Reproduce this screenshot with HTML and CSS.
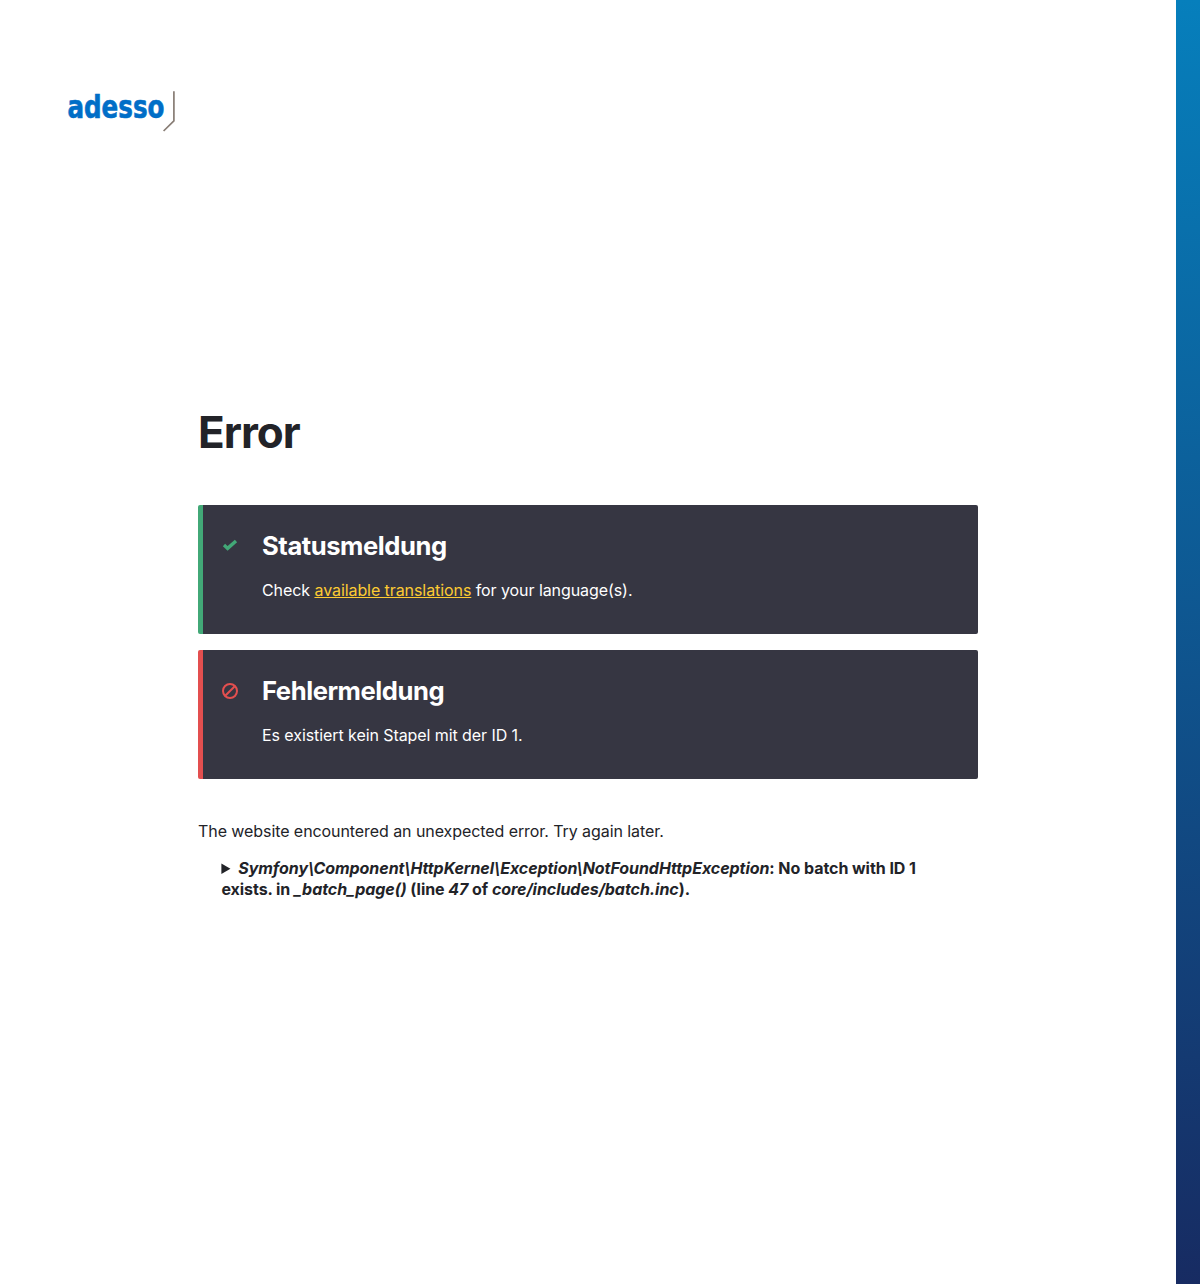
FILE: index.html
```html
<!DOCTYPE html>
<html lang="de">
<head>
<meta charset="utf-8">
<title>Error</title>
<link rel="stylesheet" href="styles.css">
</head>
<body>
<div class="page">
  <header class="site-header">
    <svg class="logo" width="108" height="42" viewBox="0 0 108 42" role="img" aria-label="adesso">
      <text class="logo-text" x="-0.6" y="28" textLength="97" lengthAdjust="spacingAndGlyphs">adesso</text>
      <path class="logo-mark" d="M105.9 1.3V30.8L95.6 41"/>
    </svg>
  </header>
  <main class="content">
    <h1 class="page-title">Error</h1>
    <div class="messages">
      <section class="message message-status">
        <svg class="message-icon" width="16" height="16" viewBox="0 0 16 16"><path d="M2 7.1L5.6 10.4L14 3" fill="none" stroke="currentColor" stroke-width="3.4"/></svg>
        <div class="message-body">
          <h2 class="message-title">Statusmeldung</h2>
          <p class="message-text">Check <a class="message-link" href="#">available translations</a> for your language(s).</p>
        </div>
      </section>
      <section class="message message-error">
        <svg class="message-icon" width="16" height="16" viewBox="0 0 16 16"><g fill="none" stroke="currentColor" stroke-width="2"><circle cx="8" cy="8" r="7"/><path d="M3.2 12.8L12.8 3.2"/></g></svg>
        <div class="message-body">
          <h2 class="message-title">Fehlermeldung</h2>
          <p class="message-text">Es existiert kein Stapel mit der ID 1.</p>
        </div>
      </section>
    </div>
    <p class="intro">The website encountered an unexpected error. Try again later.</p>
    <details class="exception">
      <summary><em>Symfony\Component\HttpKernel\Exception\NotFoundHttpException</em>: No batch with ID 1 exists. in <em>_batch_page()</em> (line <em>47</em> of <em>core/includes/batch.inc</em>).</summary>
    </details>
  </main>
</div>
<div class="side-strip"></div>
</body>
</html>
```
FILE: styles.css
```css
* { box-sizing: border-box; }
body {
  margin: 0;
  min-height: 1284px;
  display: flex;
  background: #fff;
  color: #222328;
  font: 16px/24px Inter, sans-serif;
  letter-spacing: -0.075px;
}
h1, h2, p { margin: 0; }
.page { flex: 1; }
.side-strip {
  width: 24px;
  background: linear-gradient(#067fbc, #172b62);
}
.site-header { padding: 90px 68px 0; height: 399px; }
.logo { display: block; overflow: visible; }
.logo-text {
  font: 700 32px "DejaVu Sans Condensed", "DejaVu Sans", sans-serif;
  letter-spacing: 0;
  fill: #006ec7;
  stroke: #006ec7;
  stroke-width: 0.6;
}
.logo-mark { fill: none; stroke: #887d75; stroke-width: 1.7; }
.content { width: 780px; margin: 0 auto; }
.page-title {
  font-size: 44px;
  line-height: 66px;
  font-weight: 700;
  letter-spacing: -1px;
}
.messages { display: grid; gap: 16px; margin-top: 40px; }
.message {
  display: flex;
  gap: 24px;
  height: 129px;
  padding: 24px 19px;
  border-left: 5px solid;
  border-radius: 2px;
  background: #363642;
}
.message-status { border-color: #42a877; color: #42a877; }
.message-error { border-color: #e34f4f; color: #e34f4f; }
.message-icon { flex: none; margin-top: 9px; }
.message-body { color: #fff; }
.message-title {
  font-size: 25.6px;
  line-height: 34px;
  font-weight: 700;
  letter-spacing: -0.44px;
}
.message-text { margin-top: 15px; }
.message-link { color: #fdcb33; }
.intro { margin-top: 40px; }
.exception {
  margin: 15px 24px 0 23.4px;
  line-height: 21px;
  font-weight: 700;
  letter-spacing: -0.055px;
}
```
